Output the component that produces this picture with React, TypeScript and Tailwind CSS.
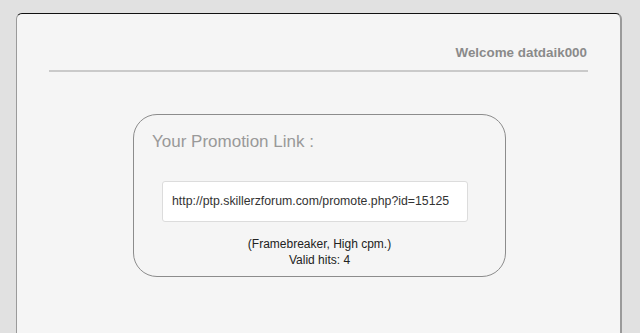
export default function App() {
  return (
    <div
      className="w-[640px] h-[333px] overflow-hidden bg-[#e1e1e1] pt-[13px] pl-[16px]"
      style={{ fontFamily: '"Liberation Sans", Arial, sans-serif' }}
    >
      <div className="w-[606px] h-[340px] bg-[#f5f5f5] rounded-[6px] border-t border-t-[#111] border-l border-l-[#9a9a9a] border-r-2 border-r-[#9a9a9a] px-[32px] pt-[31px]">
        <div className="flex justify-end pr-[1px]">
          <span className="text-[13.4px] leading-[15px] font-bold text-[#8a8a8a]">Welcome datdaik000</span>
        </div>
        <div className="mt-[10px] h-[2px] bg-[#cacaca]" />
        <div className="mt-[42px] ml-[84px] w-[373px] h-[163px] rounded-[24px] border border-[#8c8c8c] pt-[17px] pl-[18px]">
          <div className="text-[17px] leading-[20px] text-[#999999]">Your Promotion Link :</div>
          <div className="mt-[29px] ml-[10px] w-[306px] h-[41px] bg-white border border-[#dcdcdc] rounded-[3px] flex items-center pl-[9px] text-[12.3px] text-[#333]">
            http://ptp.skillerzforum.com/promote.php?id=15125
          </div>
          <div className="mt-[14px] -ml-[18px] text-center text-[12px] leading-[16px] text-[#222]">
            <div>(Framebreaker, High cpm.)</div>
            <div>Valid hits: 4</div>
          </div>
        </div>
      </div>
    </div>
  );
}
